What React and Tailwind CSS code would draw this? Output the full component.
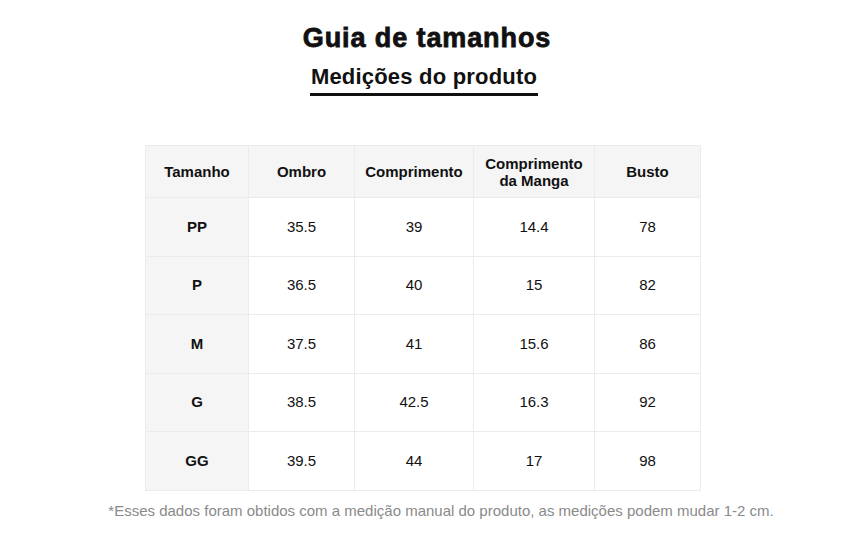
const columns = [
    { label: "Tamanho", w: "w-[102px]" },
    { label: "Ombro", w: "w-[106px]" },
    { label: "Comprimento", w: "w-[119px]" },
    { label: "Comprimento da Manga", w: "w-[121px]" },
    { label: "Busto", w: "w-[106px]" },
];

const rows = [
    ["PP", "35.5", "39", "14.4", "78"],
    ["P", "36.5", "40", "15", "82"],
    ["M", "37.5", "41", "15.6", "86"],
    ["G", "38.5", "42.5", "16.3", "92"],
    ["GG", "39.5", "44", "17", "98"],
];

const App = () => {
    return (
        <div className="w-[854px] h-[539px] bg-white font-['Liberation_Sans',Arial,sans-serif] text-[#111] flex flex-col items-center">
            <h1 className="mt-[22px] text-[27px] leading-[32px] font-bold tracking-[0.9px] [-webkit-text-stroke:0.8px_#111]">Guia de tamanhos</h1>
            <div className="mt-[10px] mr-[6px] flex flex-col items-center">
                <h2 className="text-[22px] leading-[26px] font-bold tracking-[0.2px]">Medições do produto</h2>
                <div className="mt-[3px] h-[3px] w-[228px] bg-[#111]"></div>
            </div>

            <div className="mt-[49px] mr-[8px] border border-[#ebebeb]">
                <div className="flex bg-[#f5f5f5] h-[51px]">
                    {columns.map((col, i) => (
                        <div key={i} className={`${col.w} flex items-center justify-center text-center text-[15px] leading-[17px] font-bold ${i > 0 ? "border-l border-[#ebebeb]" : ""}`}>
                            {col.label === "Comprimento da Manga" ? (<span>Comprimento<br />da Manga</span>) : col.label}
                        </div>
                    ))}
                </div>
                {rows.map((row, r) => (
                    <div key={r} className="flex h-[58.5px] border-t border-[#ebebeb]">
                        {row.map((cell, i) => (
                            <div key={i} className={`${columns[i].w} flex items-center justify-center text-[15px] ${i === 0 ? "bg-[#f5f5f5] font-bold" : "bg-white border-l border-[#ebebeb]"}`}>
                                {cell}
                            </div>
                        ))}
                    </div>
                ))}
            </div>

            <p className="mt-[9px] ml-[28px] text-[15px] text-[#8a8a8a]">*Esses dados foram obtidos com a medição manual do produto, as medições podem mudar 1-2 cm.</p>
        </div>
    )
}

export default App;
